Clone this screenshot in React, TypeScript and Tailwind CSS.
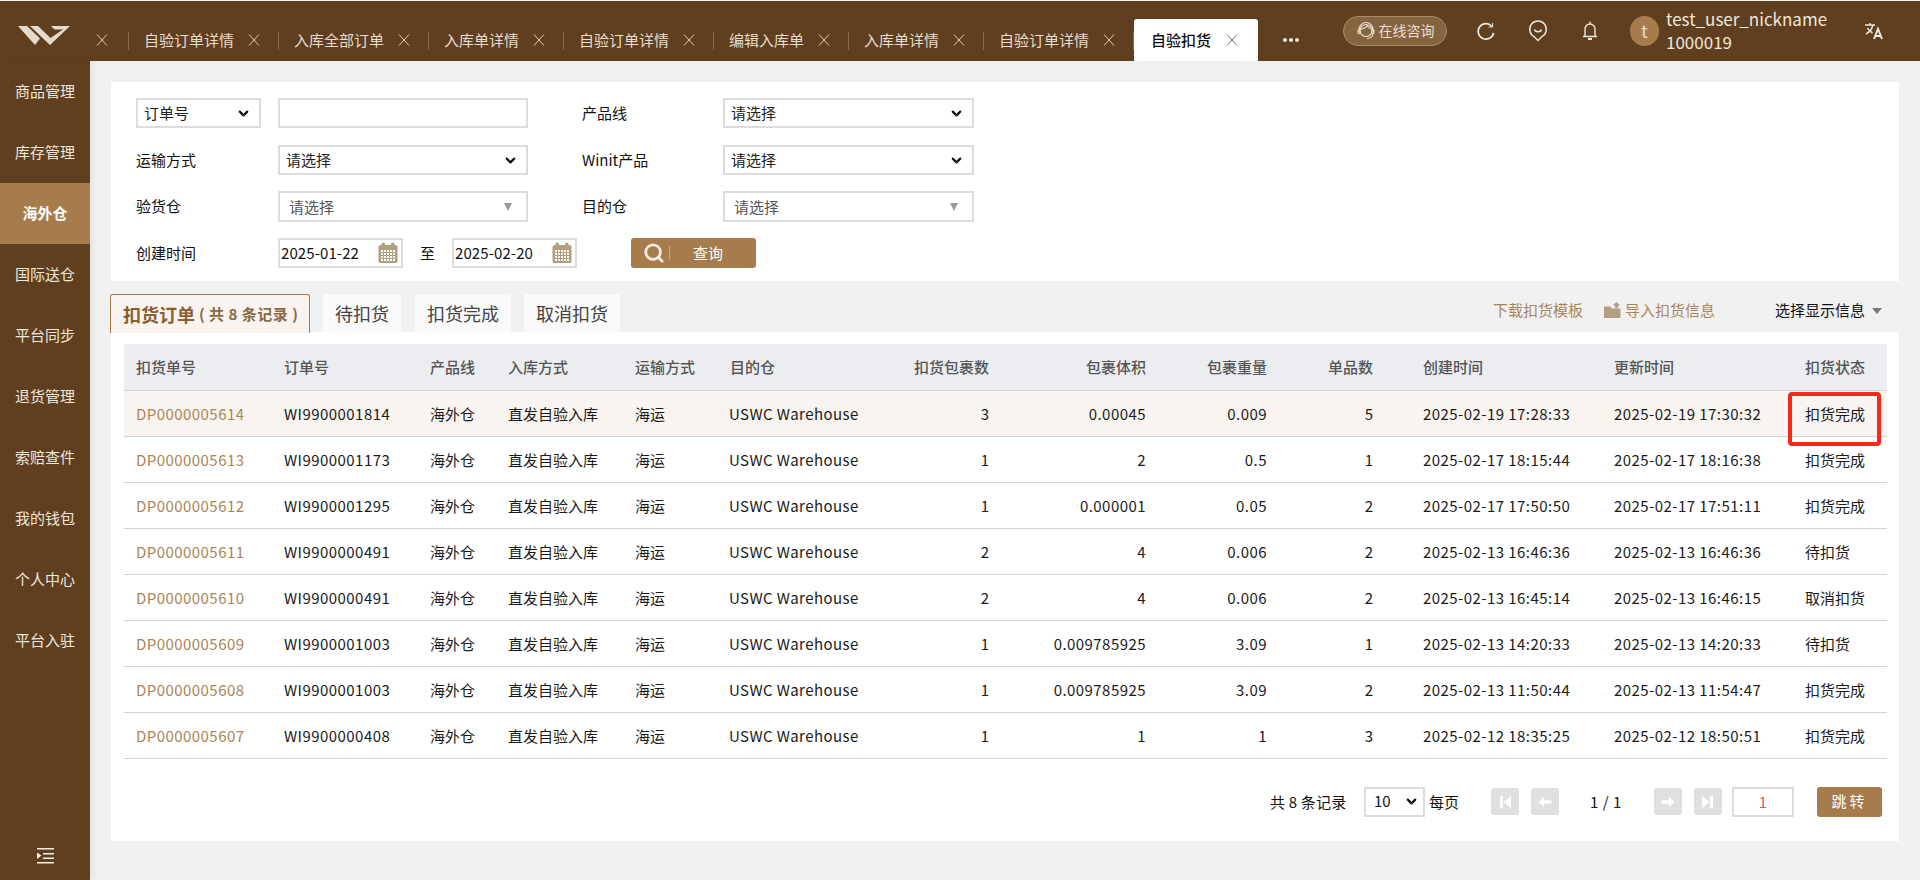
import React from 'react'
import { ChevronDown, Search } from 'lucide-react'

const font = "font-['Noto_Sans_CJK_SC','Noto_Sans',sans-serif]"

const headerTabs = [
  { title: '', w: 'w-[39px] pl-[6px] pr-[21px]' },
  { title: '自验订单详情', w: 'w-[150px] pl-[15px] pr-[19px]' },
  { title: '入库全部订单', w: 'w-[150px] pl-[15px] pr-[19px]' },
  { title: '入库单详情', w: 'w-[135px] pl-[15px] pr-[19px]' },
  { title: '自验订单详情', w: 'w-[150px] pl-[15px] pr-[19px]' },
  { title: '编辑入库单', w: 'w-[135px] pl-[15px] pr-[19px]' },
  { title: '入库单详情', w: 'w-[135px] pl-[15px] pr-[19px]' },
  { title: '自验订单详情', w: 'w-[150px] pl-[15px] pr-[19px]' },
]

const menus = ['商品管理', '库存管理', '海外仓', '国际送仓', '平台同步', '退货管理', '索赔查件', '我的钱包', '个人中心', '平台入驻']

const rows = [
  ['DP0000005614', 'WI9900001814', '3', '0.00045', '0.009', '5', '2025-02-19 17:28:33', '2025-02-19 17:30:32', '扣货完成'],
  ['DP0000005613', 'WI9900001173', '1', '2', '0.5', '1', '2025-02-17 18:15:44', '2025-02-17 18:16:38', '扣货完成'],
  ['DP0000005612', 'WI9900001295', '1', '0.000001', '0.05', '2', '2025-02-17 17:50:50', '2025-02-17 17:51:11', '扣货完成'],
  ['DP0000005611', 'WI9900000491', '2', '4', '0.006', '2', '2025-02-13 16:46:36', '2025-02-13 16:46:36', '待扣货'],
  ['DP0000005610', 'WI9900000491', '2', '4', '0.006', '2', '2025-02-13 16:45:14', '2025-02-13 16:46:15', '取消扣货'],
  ['DP0000005609', 'WI9900001003', '1', '0.009785925', '3.09', '1', '2025-02-13 14:20:33', '2025-02-13 14:20:33', '待扣货'],
  ['DP0000005608', 'WI9900001003', '1', '0.009785925', '3.09', '2', '2025-02-13 11:50:44', '2025-02-13 11:54:47', '扣货完成'],
  ['DP0000005607', 'WI9900000408', '1', '1', '1', '3', '2025-02-12 18:35:25', '2025-02-12 18:50:51', '扣货完成'],
]

const Logo = () => (
  <svg width="52" height="19" viewBox="0 0 52 19" fill="#e6dacb">
    <path d="M0 0h9l13 12.5L17 19z" />
    <path d="M12 0h8l12.5 12L45 3.5h-8.5L33 0h19L32 19z" />
  </svg>
)

const CloseX = ({ dark }: { dark?: boolean }) => (
  <svg width="12" height="12" viewBox="0 0 12 12" className={`shrink-0 ${dark ? 'text-[#777]' : 'text-[#d8cbbb]'}`}>
    <path d="M1 0.5l10 11M11 0.5L1 11.5" stroke="currentColor" strokeWidth="1" />
  </svg>
)

const Calendar = () => (
  <svg width="20" height="22" viewBox="0 0 20 22">
    <rect x="0.5" y="3" width="19" height="18" rx="2" fill="#b39f80" />
    <rect x="3.5" y="0.5" width="3.5" height="5" rx="1.5" fill="#b39f80" />
    <rect x="13" y="0.5" width="3.5" height="5" rx="1.5" fill="#b39f80" />
    {[9, 12, 15, 18].map((y) =>
      [3, 6, 9, 12, 15].map((x) => <rect key={`${x}-${y}`} x={x} y={y - 1} width="2" height="2" fill="#fff" />),
    )}
  </svg>
)

const PageIcon = ({ d }: { d: string }) => (
  <button className="w-7 h-[27px] rounded-[3px] bg-[#e0e0e0] flex items-center justify-center">
    <svg width="16" height="16" viewBox="0 0 16 16" fill="#fff">
      <path d={d} />
    </svg>
  </button>
)

const FieldLabel = ({ children, className = '' }: { children: React.ReactNode; className?: string }) => (
  <span className={`text-[15px] leading-[30px] text-[#111] ${className}`}>{children}</span>
)

const NativeSelect = ({ value, className = 'w-[250px]' }: { value: string; className?: string }) => (
  <div className={`relative h-[30px] border-2 border-[#dcdcdc] bg-white flex items-center pl-[6px] text-[15px] text-[#222] ${className}`}>
    {value}
    <ChevronDown size={15} strokeWidth={3.4} className="absolute right-2 text-[#111]" />
  </div>
)

const FakeCombo = ({ className = 'w-[250px]' }: { className?: string }) => (
  <div className={`relative h-[31px] border-2 border-[#dcdcdc] bg-white flex items-center pt-[2px] pl-[9px] text-[15px] text-[#555] ${className}`}>
    请选择
    <span className="absolute right-[14px] top-[10px] border-x-[4px] border-x-transparent border-t-[8px] border-t-[#999]" />
  </div>
)

const DateBox = ({ value }: { value: string }) => (
  <div className="w-[125px] h-[30px] border-2 border-[#dcdcdc] flex items-center justify-between pl-[1px] pr-[3px] text-[15px] tracking-[0.1px] text-[#111]">
    {value}
    <Calendar />
  </div>
)

export default function App() {
  return (
    <div className={`${font} w-[1920px] h-[880px] overflow-hidden bg-[#f1f1f1] flex flex-col`}>
      <div className="h-px bg-[#f4f4f4] shrink-0" />
      {/* top bar */}
      <header className="h-[60px] shrink-0 bg-[#5f3f1f] flex items-stretch">
        <div className="w-[90px] shrink-0 pl-[18px] pt-[25px]">
          <Logo />
        </div>
        <div className="flex items-start pt-[18px]">
          {headerTabs.map((tab, i) => (
            <div
              key={i}
              className={`${tab.w} relative h-[42px] flex items-center justify-between text-[15px] text-[#e8ddd0]`}
            >
              <span>{tab.title}</span>
              <CloseX />
              <span className="absolute right-0 top-[3px] h-[18px] w-px bg-[#8a6c4c] mt-[10px]" />
            </div>
          ))}
          <div className="w-[124px] h-[42px] bg-white rounded-t-[3px] flex items-center justify-between pl-[17px] pr-[20px] text-[15px] font-medium text-[#111]">
            <span>自验扣货</span>
            <CloseX dark />
          </div>
          <div className="ml-[25px] h-[42px] flex items-center gap-[2px]">
            <span className="w-1 h-1 rounded-full bg-[#efe7dc]" />
            <span className="w-1 h-1 rounded-full bg-[#efe7dc]" />
            <span className="w-1 h-1 rounded-full bg-[#efe7dc]" />
          </div>
        </div>
        <div className="ml-[44px] flex items-center h-[60px] pb-[1px]">
          <div className="w-[104px] h-[30px] rounded-[15px] border border-[#a88b6a] bg-[#86643f] flex items-center justify-center gap-[3px] text-[14px] text-[#eadfd2]">
            <svg width="20" height="20" viewBox="0 0 20 20" fill="none" stroke="#eadfd2" strokeWidth="1.1">
              <circle cx="10" cy="9.5" r="6" />
              <path d="M4.5 8c3 0 5-1.2 6.5-3.2 1 1.6 2.4 2.8 4.5 3.2" />
              <path d="M3 11V8.5a7 7 0 0 1 14 0V11" />
              <rect x="2" y="8.5" width="2" height="4" rx="1" />
              <rect x="16" y="8.5" width="2" height="4" rx="1" />
              <path d="M17 12.5c0 3-3 5-6 5" />
            </svg>
            在线咨询
          </div>
          {/* reload, message, bell */}
          <svg className="ml-[29px]" width="20" height="20" viewBox="0 0 20 20" fill="none" stroke="#efe7dc" strokeWidth="1.7">
            <path d="M15.8 5.2A7.8 7.8 0 1 0 17.6 12" />
            <path d="M16.6 2v4h-4" strokeWidth="1" />
          </svg>
          <svg className="ml-[32px]" width="20" height="24" viewBox="0 0 20 24" fill="none" stroke="#efe7dc" strokeWidth="1.4">
            <path d="M10 21.5 6 17.6A8.3 8.3 0 1 1 14 17.6z" />
            <path d="M6.4 10.5c1 3 6.2 3 7.2 0" />
          </svg>
          <svg className="ml-[32px]" width="20" height="22" viewBox="0 0 20 22" fill="none" stroke="#efe7dc" strokeWidth="1.4">
            <path d="M10 1.5v2M5 16V9a5 5 0 0 1 10 0v7M3 16.5h14" />
            <path d="M8 19h4" strokeWidth="2" />
          </svg>
          <div className="ml-[30px] w-[29px] h-[30px] rounded-full bg-[#a67c4c] flex items-center justify-center text-[17px] text-[#eadfd2]">t</div>
          <div className="ml-[7px] w-[190px] text-[17px] leading-[24px] text-[#efe7dc]">
            <div className="-mb-px -mt-px">test_user_nickname</div>
            <div>1000019</div>
          </div>
          <svg className="ml-[8px]" width="20" height="20" viewBox="0 0 20 20" fill="none" stroke="#efe7dc" strokeWidth="1.5">
            <path d="M1 4h10M6 2v2M9 4c-1 4-3 7-7 9M3.5 7c1 2 3 4 5 5" />
            <path d="M10 18l4-10 4 10M11.5 15h5" strokeWidth="2" />
          </svg>
        </div>
      </header>

      <div className="flex-1 flex min-h-0">
        {/* side menu */}
        <aside className="w-[90px] shrink-0 bg-[#5f3f1f] flex flex-col shadow-[3px_0_6px_rgba(0,0,0,0.06)] z-10">
          {menus.map((m) => (
            <div
              key={m}
              className={`h-[61px] flex items-center justify-center text-[15px] ${
                m === '海外仓' ? 'bg-[#a67c4c] text-[#fff] font-bold' : 'text-[#efe7dc]'
              }`}
            >
              {m}
            </div>
          ))}
          <div className="mt-auto mb-[16px] flex justify-center">
            <svg width="17" height="16" viewBox="0 0 17 16" fill="#f5eee5">
              <path d="M0 0h17v1.5H0zM6 5h11v1.5H6zM6 9.5h11V11H6zM0 14h17v1.5H0zM0 4.5l4.5 3L0 11z" />
            </svg>
          </div>
        </aside>

        <main className="flex-1 pl-[21px] pr-[21px] pt-[21px]">
          {/* filter */}
          <section className="h-[199px] bg-white pl-[25px] pt-4">
            <div className="flex h-[47px]">
              <NativeSelect value="订单号" className="w-[125px]" />
              <input className="ml-[17px] w-[250px] h-[30px] border-2 border-[#dcdcdc] outline-none" />
              <FieldLabel className="ml-[54px] w-[141px]">产品线</FieldLabel>
              <NativeSelect value="请选择" className="w-[251px]" />
            </div>
            <div className="flex h-[46px]">
              <FieldLabel className="w-[142px]">运输方式</FieldLabel>
              <NativeSelect value="请选择" />
              <FieldLabel className="ml-[54px] w-[141px]">Winit产品</FieldLabel>
              <NativeSelect value="请选择" className="w-[251px]" />
            </div>
            <div className="flex h-[47px]">
              <FieldLabel className="w-[142px]">验货仓</FieldLabel>
              <FakeCombo />
              <FieldLabel className="ml-[54px] w-[141px]">目的仓</FieldLabel>
              <FakeCombo className="w-[251px]" />
            </div>
            <div className="flex">
              <FieldLabel className="w-[142px]">创建时间</FieldLabel>
              <DateBox value="2025-01-22" />
              <FieldLabel className="mx-[17px] w-[15px]">至</FieldLabel>
              <DateBox value="2025-02-20" />
              <button className="ml-[54px] w-[125px] h-[30px] rounded-[3px] bg-[#a67c4c] flex items-center text-[15px] text-white">
                <Search size={22} strokeWidth={3} className="ml-[12px] text-[#f3ebe0]" />
                <span className="ml-[4px] h-[14px] w-px bg-[#c9a981]" />
                <span className="ml-[23px]">查询</span>
              </button>
            </div>
          </section>

          {/* tabs */}
          <div className="mt-[12px] h-[39px] flex items-end">
            <div className="-ml-px w-[200px] h-[39px] border border-b-0 border-[#a67c4c] rounded-t-[3px] bg-[#f9f4f0] flex items-center pl-[12px] text-[#8a5f30] font-bold text-[18px] -mb-px relative z-10">
              扣货订单
              <span className="ml-[4px] text-[15px] tracking-[0.5px] text-[#8a6a44]">( 共 8 条记录 )</span>
            </div>
            <div className="ml-[13px] w-[78px] h-[38px] bg-[#fafafa] rounded-t-[3px] flex items-center justify-center text-[18px] text-[#444]">待扣货</div>
            <div className="ml-[14px] w-[96px] h-[38px] bg-[#fafafa] rounded-t-[3px] flex items-center justify-center text-[18px] text-[#444]">扣货完成</div>
            <div className="ml-[13px] w-[96px] h-[38px] bg-[#fafafa] rounded-t-[3px] flex items-center justify-center text-[18px] text-[#444]">取消扣货</div>
            <div className="ml-auto h-[38px] flex items-center text-[15px] pr-[17px] pb-[5px]">
              <span className="text-[#a9855c]">下载扣货模板</span>
              <svg className="ml-[21px]" width="18" height="17" viewBox="0 0 18 17" fill="#b39f80">
                <path d="M1 4.5h5.5L8 6.5h7.5a1 1 0 0 1 1 1V15a1 1 0 0 1-1 1H1a1 1 0 0 1-1-1V5.5a1 1 0 0 1 1-1zM12.5 0l4 3.5H14V6h-3V3.5H8.5z" />
              </svg>
              <span className="ml-[3px] text-[#a9855c]">导入扣货信息</span>
              <span className="ml-[60px] text-[#111]">选择显示信息</span>
              <span className="ml-[7px] border-x-[5px] border-x-transparent border-t-[6px] border-t-[#777]" />
            </div>
          </div>

          {/* table */}
          <section className="h-[509px] bg-white pt-3 pl-[13px] pr-3 flex flex-col">
            <div className="relative">
              <table className="w-[1763px] table-fixed border-collapse text-[15px]">
                <colgroup>
                  <col className="w-[148px]" />
                  <col className="w-[146px]" />
                  <col className="w-[78px]" />
                  <col className="w-[127px]" />
                  <col className="w-[95px]" />
                  <col className="w-[162px]" />
                  <col className="w-[121px]" />
                  <col className="w-[157px]" />
                  <col className="w-[121px]" />
                  <col className="w-[132px]" />
                  <col className="w-[191px]" />
                  <col className="w-[191px]" />
                  <col className="w-[94px]" />
                </colgroup>
                <thead>
                  <tr className="h-[46px] bg-[#ecedf1] border-b border-[#cfd4df] text-[#555] font-medium">
                    {['扣货单号', '订单号', '产品线', '入库方式', '运输方式', '目的仓'].map((h) => (
                      <th key={h} className="pl-3 text-left font-medium">{h}</th>
                    ))}
                    {['扣货包裹数', '包裹体积', '包裹重量'].map((h) => (
                      <th key={h} className="pr-3 text-right font-medium">{h}</th>
                    ))}
                    <th className="pr-[38px] text-right font-medium">单品数</th>
                    {['创建时间', '更新时间', '扣货状态'].map((h) => (
                      <th key={h} className="pl-3 text-left font-medium">{h}</th>
                    ))}
                  </tr>
                </thead>
                <tbody>
                  {rows.map((r, i) => (
                    <tr key={r[0]} className={`h-[46px] border-b border-[#cfd4df] text-[#1a1a1a] ${i === 0 ? 'bg-[#f9f4f0]' : 'bg-white'}`}>
                      <td className="pl-3 pt-[2px] tracking-[0.45px] text-[#a98558]">{r[0]}</td>
                      <td className="pl-3 pt-[2px] tracking-[0.45px]">{r[1]}</td>
                      <td className="pl-3 pt-[2px]">海外仓</td>
                      <td className="pl-3 pt-[2px]">直发自验入库</td>
                      <td className="pl-3 pt-[2px]">海运</td>
                      <td className="pl-[11px] pt-[2px] tracking-[0.45px]">USWC Warehouse</td>
                      <td className="pr-3 pt-[2px] text-right">{r[2]}</td>
                      <td className="pr-3 pt-[2px] text-right tracking-[0.45px]">{r[3]}</td>
                      <td className="pr-3 pt-[2px] text-right tracking-[0.45px]">{r[4]}</td>
                      <td className="pr-[38px] pt-[2px] text-right">{r[5]}</td>
                      <td className="pl-3 pt-[2px] tracking-[0.45px]">{r[6]}</td>
                      <td className="pl-3 pt-[2px] tracking-[0.45px]">{r[7]}</td>
                      <td className="pl-3 pt-[2px]">{r[8]}</td>
                    </tr>
                  ))}
                </tbody>
              </table>
              {/* red annotation on the first row status */}
              <div className="absolute left-[1664px] top-[48px] w-[93px] h-[54px] border-4 border-[#f5281a] rounded-[4px] pointer-events-none" />
            </div>

            {/* pagination */}
            <div className="mt-[28px] flex items-center text-[15px] text-[#111]">
              <span className="ml-[1146px] w-[94px] pt-[2px] tracking-[0.2px]">共 8 条记录</span>
              <div className="w-[61px] h-[30px] border-2 border-[#dcdcdc] relative flex items-center pl-[8px]">
                10
                <ChevronDown size={15} strokeWidth={3.4} className="absolute right-[4px] text-[#111]" />
              </div>
              <span className="ml-1 w-[62px] pt-[2px]">每页</span>
              <PageIcon d="M3 2h3v12H3zM14 2v12L6.5 8z" />
              <span className="ml-3" />
              <PageIcon d="M1.5 8l5.5-5v3.2h7.5v3.6H7V13z" />
              <span className="ml-[31px] w-[64px] pt-[2px] tracking-[0.5px]">1 / 1</span>
              <PageIcon d="M14.5 8 9 3v3.2H1.5v3.6H9V13z" />
              <span className="ml-3" />
              <PageIcon d="M13 2h-3v12h3zM2 2v12l7.5-6z" />
              <input
                readOnly
                value="1"
                className="ml-[10px] w-[62px] h-[30px] border-2 border-[#dcdcdc] text-center text-[15px] text-[#e0556a] outline-none"
              />
              <button className="ml-[23px] w-[65px] h-[30px] rounded-[3px] bg-[#a67c4c] text-[15px] text-white tracking-[3px]">跳转</button>
            </div>
          </section>
        </main>
      </div>
    </div>
  )
}
